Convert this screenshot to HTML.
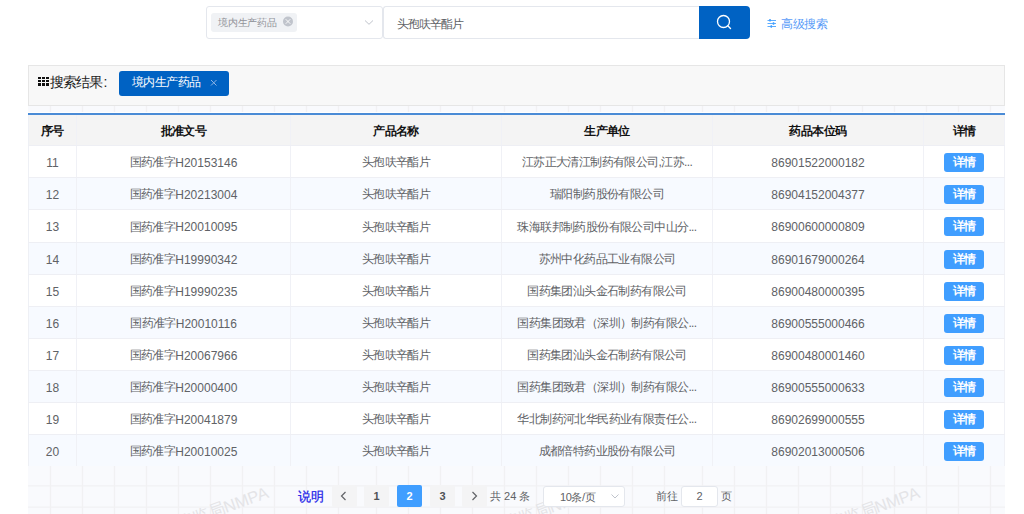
<!DOCTYPE html>
<html><head><meta charset="utf-8">
<style>
*{box-sizing:border-box;margin:0;padding:0}
html,body{width:1024px;height:514px;overflow:hidden;background:#fff;font-family:"Liberation Sans",sans-serif;color:#606266}
.abs{position:absolute}
#sel{left:206px;top:6px;width:177px;height:33px;border:1px solid #e4e7ed;border-radius:3px;background:#fff}
#seltag{left:4px;top:5.5px;width:86px;height:19px;background:#f0f2f5;border-radius:3px;font-size:10px;letter-spacing:-0.2px;line-height:19px;color:#909399;padding-left:7px}
#inp{left:383px;top:6px;width:316px;height:33px;border:1px solid #e4e7ed;border-right:none;border-radius:3px 0 0 3px;background:#fff;font-size:12px;letter-spacing:-0.95px;line-height:34px;padding-left:13px;color:#606266}
#btn{left:699px;top:6px;width:51px;height:32.5px;background:#0062c3;border-radius:0 4px 4px 0}
#adv{left:781px;top:16px;font-size:12px;letter-spacing:-0.4px;color:#5a9cf8;line-height:16px}
#res{left:28px;top:65px;width:977px;height:41px;background:#f8f8f8;border:1px solid #e6e6e6}
#res .t{position:absolute;left:21px;top:8px;font-size:14px;letter-spacing:-0.9px;line-height:16px;color:#222}
#res .ico{left:9px;top:10.5px;width:11px;height:9px;background:linear-gradient(90deg,#111 3px,transparent 3px,transparent 4px,#111 4px,#111 7px,transparent 7px,transparent 8px,#111 8px);-webkit-mask:linear-gradient(#000 2px,transparent 2px,transparent 3px,#000 3px,#000 5px,transparent 5px,transparent 6px,#000 6px)}
#restag{left:90px;top:5px;width:110px;height:25px;background:#0062c3;border-radius:3px;color:#fff;font-size:12px;letter-spacing:-0.6px;line-height:23px;padding-left:13px}
#blue{left:28px;top:113px;width:977px;height:2px;background:#4a8bd6}
#tbl{left:28px;top:115px;width:977px;height:351px}
.row{position:absolute;left:0;width:977px;height:32px;border-bottom:1px solid #eeeff4}
.row.h{background:#f4f4f4;height:31px}
.row.e{background:#f7faff}
.c{position:absolute;top:0;height:100%;text-align:center;font-size:12px;letter-spacing:-0.6px;padding-top:2px;white-space:nowrap;overflow:hidden;border-right:1px solid #f0f1f6;display:flex;align-items:center;justify-content:center}
.h .c{font-weight:bold;color:#111;font-size:12px;padding-top:3px}
.n{font-size:12px;letter-spacing:0}
.c1{left:0;width:49px;border-left:1px solid #eef0f5}
.c2{left:49px;width:214px}
.c3{left:263px;width:211px}
.c4{left:474px;width:211px}
.c5{left:685px;width:211px}
.c6{left:896px;width:81px}
.dbtn{display:inline-block;width:40px;height:19px;line-height:19px;background:#409eff;color:#fff;border-radius:3px;font-size:12px;font-weight:bold;margin-top:-0.6px}
.pg{position:absolute;top:486px;white-space:nowrap;height:22px;line-height:22px;font-size:11px;text-align:center}
.pb{background:#f4f4f5;color:#505256;font-weight:bold;width:25px;border-radius:2px;top:485px;height:22px}
</style></head><body>
<div id="sel" class="abs"><div id="seltag" class="abs">境内生产药品</div></div>
<div id="inp" class="abs">头孢呋辛酯片</div>
<div id="btn" class="abs"></div>
<svg class="abs" style="left:0;top:0" width="1024" height="60">
<circle cx="288" cy="21.5" r="5" fill="#c0c4cc"/>
<path d="M286 19.5 L290 23.5 M290 19.5 L286 23.5" stroke="#fff" stroke-width="0.9" stroke-linecap="round"/>
<path d="M365 20.5 L369 24.3 L373 20.5" fill="none" stroke="#c0c4cc" stroke-width="1"/>
<circle cx="723.5" cy="21.5" r="6" fill="none" stroke="#fff" stroke-width="1.3"/>
<path d="M728 26 L730.5 28.5" stroke="#fff" stroke-width="1.4" stroke-linecap="round"/>
<path d="M767.5 20.5 H776 M767.5 23.5 H776 M767.5 26.5 H776" stroke="#4aa3ff" stroke-width="0.9"/>
<path d="M770 19 V21.5 M773.5 22.3 V24.8 M771.3 25.3 V27.8" stroke="#409eff" stroke-width="1.5"/>
</svg>
<div id="adv" class="abs">高级搜索</div>
<div id="res" class="abs"><div class="ico abs"></div><div class="t">搜索结果<span style="margin-left:1px">:</span></div><div id="restag" class="abs">境内生产药品<svg width="10" height="10" style="position:absolute;left:90px;top:7px"><path d="M2 2 L7.5 7.5 M7.5 2 L2 7.5" stroke="#8db4e6" stroke-width="1"/></svg></div></div>
<svg class="abs" style="left:28px;top:106px" width="977" height="6">
<rect width="977" height="8" fill="#f9fafd"/>
<path d="M22.5 0V8M54.5 0V8M86.5 0V8M118.5 0V8M150.5 0V8M182.5 0V8M214.5 0V8M246.5 0V8M278.5 0V8M310.5 0V8M348.5 0V8M380.5 0V8M412.5 0V8M444.5 0V8M476.5 0V8M508.5 0V8M540.5 0V8M572.5 0V8M604.5 0V8M636.5 0V8M674.5 0V8M706.5 0V8M738.5 0V8M770.5 0V8M802.5 0V8M834.5 0V8M866.5 0V8M898.5 0V8M930.5 0V8M962.5 0V8" stroke="#f1f1f3" stroke-width="1.3"/>
</svg>
<div id="blue" class="abs"></div>
<div id="tbl" class="abs">
<div class="row h" style="top:0"><div class="c c1">序号</div><div class="c c2">批准文号</div><div class="c c3">产品名称</div><div class="c c4">生产单位</div><div class="c c5">药品本位码</div><div class="c c6">详情</div></div>
<div class="row" style="top:31px;height:32px"><div class="c c1"><span class="n">11</span></div><div class="c c2">国药准字<span class="n">H20153146</span></div><div class="c c3">头孢呋辛酯片</div><div class="c c4">江苏正大清江制药有限公司,江苏...</div><div class="c c5"><span class="n">86901522000182</span></div><div class="c c6"><span class="dbtn">详情</span></div></div>
<div class="row e" style="top:63px;height:32px"><div class="c c1"><span class="n">12</span></div><div class="c c2">国药准字<span class="n">H20213004</span></div><div class="c c3">头孢呋辛酯片</div><div class="c c4">瑞阳制药股份有限公司</div><div class="c c5"><span class="n">86904152004377</span></div><div class="c c6"><span class="dbtn">详情</span></div></div>
<div class="row" style="top:95px;height:33px"><div class="c c1"><span class="n">13</span></div><div class="c c2">国药准字<span class="n">H20010095</span></div><div class="c c3">头孢呋辛酯片</div><div class="c c4">珠海联邦制药股份有限公司中山分...</div><div class="c c5"><span class="n">86900600000809</span></div><div class="c c6"><span class="dbtn">详情</span></div></div>
<div class="row e" style="top:128px;height:32px"><div class="c c1"><span class="n">14</span></div><div class="c c2">国药准字<span class="n">H19990342</span></div><div class="c c3">头孢呋辛酯片</div><div class="c c4">苏州中化药品工业有限公司</div><div class="c c5"><span class="n">86901679000264</span></div><div class="c c6"><span class="dbtn">详情</span></div></div>
<div class="row" style="top:160px;height:32px"><div class="c c1"><span class="n">15</span></div><div class="c c2">国药准字<span class="n">H19990235</span></div><div class="c c3">头孢呋辛酯片</div><div class="c c4">国药集团汕头金石制药有限公司</div><div class="c c5"><span class="n">86900480000395</span></div><div class="c c6"><span class="dbtn">详情</span></div></div>
<div class="row e" style="top:192px;height:32px"><div class="c c1"><span class="n">16</span></div><div class="c c2">国药准字<span class="n">H20010116</span></div><div class="c c3">头孢呋辛酯片</div><div class="c c4">国药集团致君（深圳）制药有限公...</div><div class="c c5"><span class="n">86900555000466</span></div><div class="c c6"><span class="dbtn">详情</span></div></div>
<div class="row" style="top:224px;height:32px"><div class="c c1"><span class="n">17</span></div><div class="c c2">国药准字<span class="n">H20067966</span></div><div class="c c3">头孢呋辛酯片</div><div class="c c4">国药集团汕头金石制药有限公司</div><div class="c c5"><span class="n">86900480001460</span></div><div class="c c6"><span class="dbtn">详情</span></div></div>
<div class="row e" style="top:256px;height:32px"><div class="c c1"><span class="n">18</span></div><div class="c c2">国药准字<span class="n">H20000400</span></div><div class="c c3">头孢呋辛酯片</div><div class="c c4">国药集团致君（深圳）制药有限公...</div><div class="c c5"><span class="n">86900555000633</span></div><div class="c c6"><span class="dbtn">详情</span></div></div>
<div class="row" style="top:288px;height:32px"><div class="c c1"><span class="n">19</span></div><div class="c c2">国药准字<span class="n">H20041879</span></div><div class="c c3">头孢呋辛酯片</div><div class="c c4">华北制药河北华民药业有限责任公...</div><div class="c c5"><span class="n">86902699000555</span></div><div class="c c6"><span class="dbtn">详情</span></div></div>
<div class="row e" style="top:320px;height:32px"><div class="c c1"><span class="n">20</span></div><div class="c c2">国药准字<span class="n">H20010025</span></div><div class="c c3">头孢呋辛酯片</div><div class="c c4">成都倍特药业股份有限公司</div><div class="c c5"><span class="n">86902013000506</span></div><div class="c c6"><span class="dbtn">详情</span></div></div>
</div>
<svg class="abs" style="left:28px;top:466px" width="977" height="48">
<rect width="977" height="48" fill="#f9fafd"/>
<path d="M22.5 0V48M54.5 0V48M86.5 0V48M118.5 0V48M150.5 0V48M182.5 0V48M214.5 0V48M246.5 0V48M278.5 0V48M310.5 0V48M348.5 0V48M380.5 0V48M412.5 0V48M444.5 0V48M476.5 0V48M508.5 0V48M540.5 0V48M572.5 0V48M604.5 0V48M636.5 0V48M674.5 0V48M706.5 0V48M738.5 0V48M770.5 0V48M802.5 0V48M834.5 0V48M866.5 0V48M898.5 0V48M930.5 0V48M962.5 0V48" stroke="#f1f1f3" stroke-width="1.3"/>
<path d="M0 19.8H977M0 41.2H977" stroke="#f1f1f3" stroke-width="1.3"/>
<g transform="rotate(-20 198.0 47)" fill="#e4e4e7" font-size="16.5" font-family="Liberation Sans, sans-serif"><text x="198.0" y="47">NMPA</text><text x="199.5" y="47" text-anchor="end">国家药监局</text></g>
<g transform="rotate(-20 523.6 47)" fill="#e4e4e7" font-size="16.5" font-family="Liberation Sans, sans-serif"><text x="523.6" y="47">NMPA</text><text x="525.1" y="47" text-anchor="end">国家药监局</text></g>
<g transform="rotate(-20 849.2 47)" fill="#e4e4e7" font-size="16.5" font-family="Liberation Sans, sans-serif"><text x="849.2" y="47">NMPA</text><text x="850.7" y="47" text-anchor="end">国家药监局</text></g>
</svg>
<div class="pg" style="left:297px;top:486px;width:28px;color:#1c1ce8;font-size:13px;-webkit-text-stroke:0.25px #1c1ce8">说明</div>
<div class="pg pb" style="left:332px"><svg width="25" height="22" style="position:absolute;left:0;top:0"><path d="M13.5 7 L9.5 11 L13.5 15" fill="none" stroke="#606266" stroke-width="1.2"/></svg></div>
<div class="pg pb" style="left:364px">1</div>
<div class="pg pb" style="left:397px;background:#409eff;color:#fff">2</div>
<div class="pg pb" style="left:430px">3</div>
<div class="pg pb" style="left:462px"><svg width="25" height="22" style="position:absolute;left:0;top:0"><path d="M10.5 7 L14.5 11 L10.5 15" fill="none" stroke="#606266" stroke-width="1.2"/></svg></div>
<div class="pg" style="left:490px;top:485px;color:#606266">共 24 条</div>
<div class="pg" style="left:543px;top:485.5px;width:81.5px;height:21.5px;background:#fff;border:1px solid #e4e7ed;border-radius:3px;line-height:20px;text-align:left;padding-left:16px;letter-spacing:-0.4px;color:#606266">10条/页<svg width="10" height="8" style="position:absolute;left:66px;top:6px"><path d="M1.5 1.5 L5 5 L8.5 1.5" fill="none" stroke="#c0c4cc" stroke-width="1"/></svg></div>
<div class="pg" style="left:656px;top:485px;color:#606266">前往</div>
<div class="pg" style="left:681px;top:485.5px;height:21.5px;width:37px;background:#fff;border:1px solid #e4e7ed;border-radius:3px;line-height:19.5px;color:#606266">2</div>
<div class="pg" style="left:721px;top:485px;color:#606266">页</div>

</body></html>
